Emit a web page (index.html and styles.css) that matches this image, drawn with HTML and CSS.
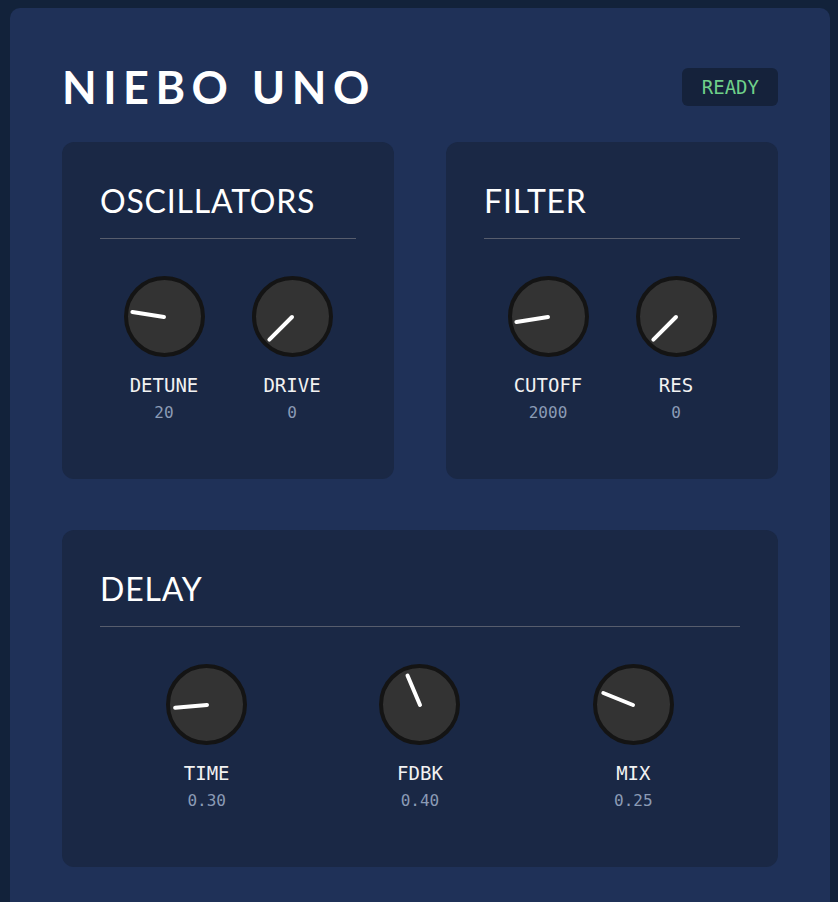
FILE: index.html
```html
<!DOCTYPE html>
<html lang="en">
<head>
    <meta charset="UTF-8">
    <meta name="viewport" content="width=device-width, initial-scale=1.0">
    <title>Niebo Uno</title>
    <link rel="stylesheet" href="styles.css">
</head>
<body>
    <div class="synth">
        <header class="synth-header">
            <h1 class="synth-title">NIEBO UNO</h1>
            <div class="status">READY</div>
        </header>

        <div class="modules">
            <section class="module">
                <h2 class="module-title">OSCILLATORS</h2>
                <div class="knobs">
                    <div class="control">
                        <div class="knob"><span class="knob-pointer" style="transform: rotate(-81deg)"></span></div>
                        <div class="control-label">DETUNE</div>
                        <div class="control-value">20</div>
                    </div>
                    <div class="control">
                        <div class="knob"><span class="knob-pointer" style="transform: rotate(-135deg)"></span></div>
                        <div class="control-label">DRIVE</div>
                        <div class="control-value">0</div>
                    </div>
                </div>
            </section>

            <section class="module">
                <h2 class="module-title">FILTER</h2>
                <div class="knobs">
                    <div class="control">
                        <div class="knob"><span class="knob-pointer" style="transform: rotate(-99deg)"></span></div>
                        <div class="control-label">CUTOFF</div>
                        <div class="control-value">2000</div>
                    </div>
                    <div class="control">
                        <div class="knob"><span class="knob-pointer" style="transform: rotate(-135deg)"></span></div>
                        <div class="control-label">RES</div>
                        <div class="control-value">0</div>
                    </div>
                </div>
            </section>

            <section class="module module-wide">
                <h2 class="module-title">DELAY</h2>
                <div class="knobs">
                    <div class="control">
                        <div class="knob"><span class="knob-pointer" style="transform: rotate(-95deg)"></span></div>
                        <div class="control-label">TIME</div>
                        <div class="control-value">0.30</div>
                    </div>
                    <div class="control">
                        <div class="knob"><span class="knob-pointer" style="transform: rotate(-23deg)"></span></div>
                        <div class="control-label">FDBK</div>
                        <div class="control-value">0.40</div>
                    </div>
                    <div class="control">
                        <div class="knob"><span class="knob-pointer" style="transform: rotate(-68deg)"></span></div>
                        <div class="control-label">MIX</div>
                        <div class="control-value">0.25</div>
                    </div>
                </div>
            </section>
        </div>
    </div>
</body>
</html>
```

FILE: styles.css
```css
body {
    margin: 8px 8px 0 10px;
    background-color: #12223a;
    font-family: Lato, "Open Sans", sans-serif;
    color: #fff;
}
.synth {
    padding: 52px 52px 52px;
    background-color: #1f3158;
    border-radius: 10px 10px 0 0;
}
.synth-header {
    display: flex;
    align-items: center;
    justify-content: space-between;
    margin-bottom: 28px;
}
.synth-title {
    margin: 0;
    font-size: 45px;
    line-height: 54px;
    font-weight: 700;
    letter-spacing: 6.5px;
}
.status {
    padding: 0 19px 0 20px;
    height: 38px;
    line-height: 38px;
    background-color: #15223b;
    border-radius: 6px;
    font-family: "DejaVu Sans Mono", monospace;
    font-size: 19px;
    color: #6fd08a;
}
.modules {
    display: grid;
    grid-template-columns: 1fr 1fr;
    row-gap: 51px;
    column-gap: 52px;
}
.module {
    padding: 38px 38px 56px;
    background-color: #1a2845;
    border-radius: 12px;
}
.module-wide {
    grid-column: 1 / 3;
}
.module-title {
    margin: 0;
    padding-bottom: 16px;
    border-bottom: 1px solid #575d6d;
    font-size: 32px;
    line-height: 42px;
    font-weight: 400;
    letter-spacing: 0.8px;
}
.knobs {
    display: grid;
    grid-auto-flow: column;
    grid-auto-columns: 1fr;
    margin-top: 37px;
}
.control {
    display: flex;
    flex-direction: column;
    align-items: center;
    font-family: "DejaVu Sans Mono", monospace;
}
.knob {
    position: relative;
    width: 81px;
    height: 81px;
    box-sizing: border-box;
    border: 4px solid #141414;
    border-radius: 50%;
    background-color: #333;
}
.knob-pointer {
    position: absolute;
    left: 50%;
    top: calc(50% - 34px);
    width: 4px;
    height: 36px;
    margin-left: -2px;
    background-color: #fff;
    border-radius: 2px;
    transform-origin: 50% 34px;
}
.control-label {
    margin-top: 16px;
    font-size: 19px;
    line-height: 24px;
    color: #f2f2f2;
}
.control-value {
    margin-top: 6px;
    font-size: 16px;
    line-height: 20px;
    color: #8b9bb5;
}
```
